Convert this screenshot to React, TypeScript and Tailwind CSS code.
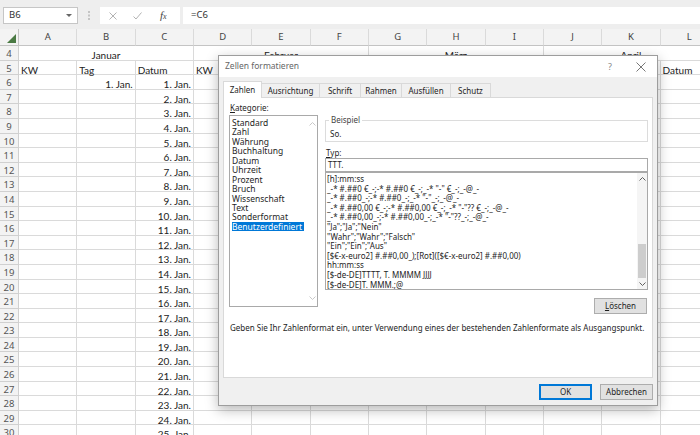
import React from 'react';

const COLS = ['A', 'B', 'C', 'D', 'E', 'F', 'G', 'H', 'I', 'J', 'K', 'L'];
const MONTHS = ['Januar', 'Februar', 'März', 'April'];
const HEAD5 = ['KW', 'Tag', 'Datum'];
const ROWS = Array.from({ length: 25 }, (_, i) => i + 6);

const CATEGORIES = [
  'Standard',
  'Zahl',
  'Währung',
  'Buchhaltung',
  'Datum',
  'Uhrzeit',
  'Prozent',
  'Bruch',
  'Wissenschaft',
  'Text',
  'Sonderformat',
  'Benutzerdefiniert',
];

const FORMATS = [
  '[h]:mm:ss',
  '_-* #.##0 €_-;-* #.##0 €_-;_-* "-" €_-;_-@_-',
  '_-* #.##0_-;-* #.##0_-;_-* "-"_-;_-@_-',
  '_-* #.##0,00 €_-;-* #.##0,00 €_-;_-* "-"?? €_-;_-@_-',
  '_-* #.##0,00_-;-* #.##0,00_-;_-* "-"??_-;_-@_-',
  '"Ja";"Ja";"Nein"',
  '"Wahr";"Wahr";"Falsch"',
  '"Ein";"Ein";"Aus"',
  '[$€-x-euro2] #.##0,00_);[Rot]([$€-x-euro2] #.##0,00)',
  'hh:mm:ss',
  '[$-de-DE]TTTT, T. MMMM JJJJ',
  '[$-de-DE]T. MMM.;@',
];

const TABS = [
  { label: 'Zahlen', w: 'w-[39px]', active: true },
  { label: 'Ausrichtung', w: 'w-[59px]', active: false },
  { label: 'Schrift', w: 'w-[42px]', active: false },
  { label: 'Rahmen', w: 'w-[42px]', active: false },
  { label: 'Ausfüllen', w: 'w-[50px]', active: false },
  { label: 'Schutz', w: 'w-[41px]', active: false },
];

function ChevronUp({ color = '#606060' }: { color?: string }) {
  return (
    <svg width="7" height="4" viewBox="0 0 7 4">
      <path d="M0.5 3.5 L3.5 0.5 L6.5 3.5" fill="none" stroke={color} strokeWidth="1" />
    </svg>
  );
}

function ChevronDown({ color = '#606060' }: { color?: string }) {
  return (
    <svg width="7" height="4" viewBox="0 0 7 4">
      <path d="M0.5 0.5 L3.5 3.5 L6.5 0.5" fill="none" stroke={color} strokeWidth="1" />
    </svg>
  );
}

function FormulaBar() {
  return (
    <div className="flex h-[29px] items-start bg-[#eeeeee] pt-[7px] font-['Noto_Sans',sans-serif] text-[9.5px] text-[#333]">
      <div className="ml-[3px] flex h-[17px] w-[75px] items-center justify-between border border-[#c6c6c6] bg-white pl-[5px] pr-[5px]">
        <span>B6</span>
        <svg width="6" height="3" viewBox="0 0 6 3">
          <path d="M0 0 L6 0 L3 3 Z" fill="#666" />
        </svg>
      </div>
      <div className="flex h-[17px] w-[22px] items-center justify-center">
        <svg width="2" height="9" viewBox="0 0 2 9">
          <rect x="0" y="0" width="2" height="2" fill="#c4c4c4" />
          <rect x="0" y="3.5" width="2" height="2" fill="#c4c4c4" />
          <rect x="0" y="7" width="2" height="2" fill="#c4c4c4" />
        </svg>
      </div>
      <div className="flex h-[17px] w-[80px] items-center bg-white">
        <svg className="ml-[9px]" width="8" height="8" viewBox="0 0 8 8">
          <path d="M0.5 0.5 L7.5 7.5 M7.5 0.5 L0.5 7.5" stroke="#b3b3b3" strokeWidth="1" />
        </svg>
        <svg className="ml-[16px]" width="9" height="8" viewBox="0 0 9 8">
          <path d="M0.5 4.5 L3 7 L8.5 0.5" fill="none" stroke="#b3b3b3" strokeWidth="1" />
        </svg>
        <span className="ml-[18px] font-['Liberation_Serif',serif] text-[11px] italic text-[#444]">
          f<span className="text-[8px]">x</span>
        </span>
      </div>
      <div className="ml-[3px] flex h-[17px] flex-1 items-center bg-white pl-[8px]">=C6</div>
    </div>
  );
}

function RowHead({ n }: { n: number }) {
  return (
    <div className="h-[14.6px] border-r border-b border-[#d0d0d0] bg-[#f3f3f3] pt-[2px] text-center font-['Noto_Sans',sans-serif] text-[9.5px] leading-[12px] text-[#555]">
      {n}
    </div>
  );
}

function Cell({ children, right }: { children?: React.ReactNode; right?: boolean }) {
  return (
    <div
      className={`h-[14.6px] whitespace-nowrap border-r border-b border-[#dadada] px-[2px] pt-[3px] leading-[12px] ${
        right ? 'text-right' : 'text-left'
      }`}
    >
      {children}
    </div>
  );
}

function Sheet() {
  return (
    <div className="grid grid-cols-[19px_repeat(12,58.33px)] font-['Lato',sans-serif] text-[10px] text-[#222]">
      <div className="relative h-[17px] border-r border-b border-[#c4c4c4] bg-[#f3f3f3]">
        <svg className="absolute right-[2px] bottom-[2px]" width="9" height="9" viewBox="0 0 9 9">
          <polygon points="9,0 9,9 0,9" fill="#4b7a44" />
        </svg>
      </div>
      {COLS.map((c) => (
        <div
          key={c}
          className="flex h-[17px] items-center justify-center border-r border-b border-r-[#dadada] border-b-[#c4c4c4] bg-[#f3f3f3] font-['Noto_Sans',sans-serif] text-[9.5px] text-[#444]"
        >
          {c}
        </div>
      ))}

      <RowHead n={4} />
      {MONTHS.map((m) => (
        <div
          key={m}
          className="col-span-3 h-[14.6px] border-r border-b border-[#dadada] pt-[3px] text-center leading-[12px]"
        >
          {m}
        </div>
      ))}

      <RowHead n={5} />
      {COLS.map((c, i) => (
        <Cell key={c}>{HEAD5[i % 3]}</Cell>
      ))}

      {ROWS.map((n) => (
        <React.Fragment key={n}>
          <RowHead n={n} />
          {COLS.map((c) => (
            <Cell key={c} right>
              {c === 'C' ? `${n - 5}. Jan.` : c === 'B' && n === 6 ? '1. Jan.' : ''}
            </Cell>
          ))}
        </React.Fragment>
      ))}
    </div>
  );
}

function Button({ children, primary }: { children: React.ReactNode; primary?: boolean }) {
  return (
    <div
      className={`flex h-[16px] w-[53px] items-center justify-center bg-[#e1e1e1] ${
        primary ? 'border border-[#0078d7] shadow-[inset_0_0_0_1px_#0078d7]' : 'border border-[#adadad]'
      }`}
    >
      {children}
    </div>
  );
}

function FormatDialog() {
  return (
    <div className="absolute left-[218px] top-[55px] flex w-[440px] flex-col border border-[#9d9d9d] bg-[#f0f0f0] font-['Noto_Sans',sans-serif] text-[8px] text-[#1e1e1e] shadow-[0_4px_12px_rgba(0,0,0,0.28)]">
      <div className="flex h-[21px] items-center bg-white pl-[6px] pr-[11px] text-[8.5px] text-[#666]">
        <span>Zellen formatieren</span>
        <span className="ml-auto mr-[24px] text-[9px] text-[#888]">?</span>
        <svg width="10" height="10" viewBox="0 0 10 10">
          <path d="M0.5 0.5 L9.5 9.5 M9.5 0.5 L0.5 9.5" stroke="#777" strokeWidth="1" />
        </svg>
      </div>

      <div className="px-[4px] pt-[4px]">
        <div className="relative z-10 flex h-[16px] items-end">
          {TABS.map((t, i) => (
            <div
              key={t.label}
              className={`flex items-center justify-center border border-b-0 border-[#d9d9d9] ${t.w} ${
                i > 0 ? '-ml-px' : ''
              } ${t.active ? '-mb-px h-[17px] bg-white' : 'h-[14px] bg-[#f0f0f0]'}`}
            >
              {t.label}
            </div>
          ))}
        </div>

        <div className="flex h-[281px] flex-col border border-[#d9d9d9] bg-white">
          <div className="flex pt-[5px] pl-[5px]">
            <div className="w-[89px]">
              <div className="h-[10px] pl-[1px] leading-[10px]">
                <span className="underline">K</span>ategorie:
              </div>
              <div className="mt-[2px] flex h-[192px] border border-[#a9a9a9]">
                <div className="flex-1 pl-[2px] pt-[2px] text-[8.5px]">
                  {CATEGORIES.map((c) => (
                    <div key={c} className="h-[9.45px] leading-[9.45px]">
                      <span
                        className={
                          c === 'Benutzerdefiniert'
                            ? 'inline-block bg-[#0078d7] pr-[2px] text-white'
                            : 'inline-block'
                        }
                      >
                        {c}
                      </span>
                    </div>
                  ))}
                </div>
                <div className="flex w-[10px] flex-col items-center justify-between py-[6px]">
                  <ChevronUp color="#c8c8c8" />
                  <ChevronDown color="#c8c8c8" />
                </div>
              </div>
            </div>

            <div className="ml-[7px] flex w-[323px] flex-col">
              <fieldset className="mt-[12px] border border-[#dcdcdc]">
                <legend className="ml-[3px] px-[2px] leading-[10px] text-[#444]">Beispiel</legend>
                <div className="pt-[4px] pb-[2px] pl-[4px] leading-[10px]">So.</div>
              </fieldset>
              <div className="mt-[6px] h-[10px] pl-[1px] leading-[10px]">
                <span className="underline">T</span>yp:
              </div>
              <div className="flex h-[14px] items-center border border-[#a9a9a9] pl-[2px]">TTT.</div>
              <div className="flex h-[118px] border border-[#a9a9a9]">
                <div className="flex-1 overflow-hidden pl-[1px] pt-[1px]">
                  {FORMATS.map((f) => (
                    <div key={f} className="h-[9.6px] whitespace-pre leading-[9.6px]">
                      {f}
                    </div>
                  ))}
                </div>
                <div className="flex w-[10px] flex-col items-center bg-[#f5f5f5]">
                  <div className="flex h-[11px] items-center">
                    <ChevronUp />
                  </div>
                  <div className="flex-1" />
                  <div className="h-[34px] w-[8px] bg-[#cdcdcd]" />
                  <div className="flex h-[11px] items-center">
                    <ChevronDown />
                  </div>
                </div>
              </div>
              <div className="mt-[8px] flex justify-end pr-[1px]">
                <Button>
                  <span className="underline">L</span>öschen
                </Button>
              </div>
            </div>
          </div>
          <div className="mt-[9px] pl-[6px] leading-[10px]">
            Geben Sie Ihr Zahlenformat ein, unter Verwendung eines der bestehenden Zahlenformate als Ausgangspunkt.
          </div>
        </div>
      </div>

      <div className="flex justify-end gap-[8px] pt-[6px] pr-[4px] pb-[5px]">
        <Button primary>OK</Button>
        <Button>Abbrechen</Button>
      </div>
    </div>
  );
}

export default function App() {
  return (
    <div className="relative h-[435px] w-[700px] overflow-hidden bg-white">
      <FormulaBar />
      <Sheet />
      <FormatDialog />
    </div>
  );
}
